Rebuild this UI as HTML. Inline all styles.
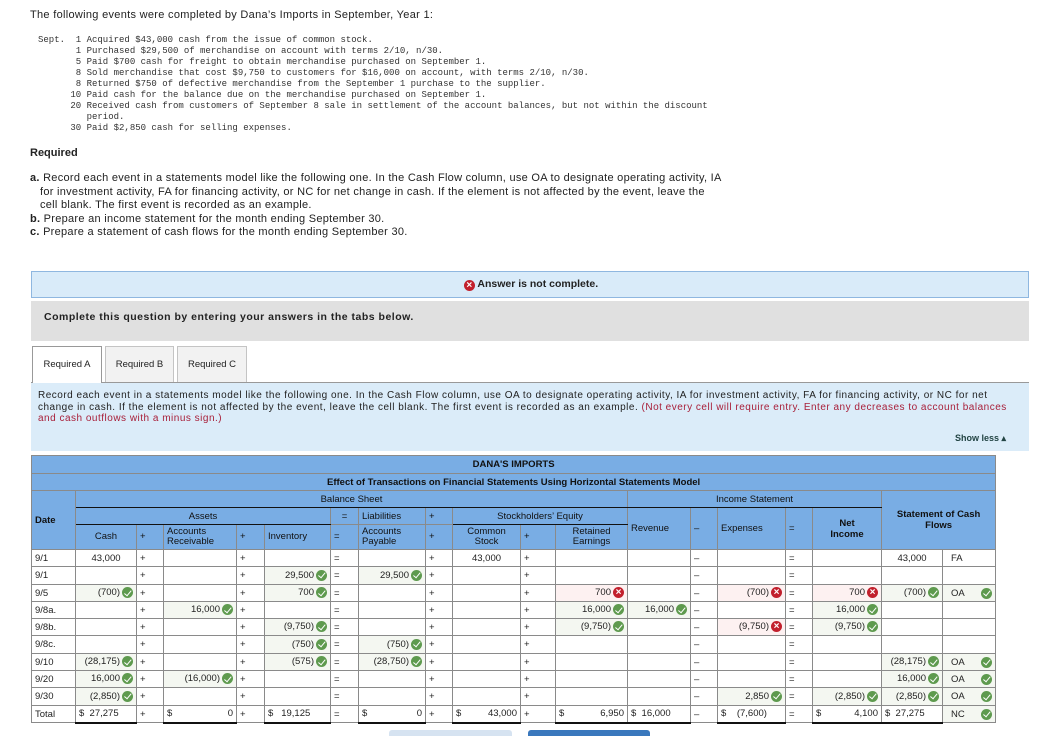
<!DOCTYPE html>
<html><head><meta charset="utf-8">
<style>
*{box-sizing:border-box;margin:0;padding:0}
body{width:1041px;height:736px;overflow:hidden;background:#fff;font-family:"Liberation Sans",Arial,sans-serif;color:#222;position:relative}
.abs{position:absolute}
.intro{left:30px;top:9px;font-size:11px;letter-spacing:0.3px}
.mono{left:38px;top:35px;font-family:"Liberation Mono",monospace;font-size:9px;line-height:11px;color:#333;white-space:pre}
.req{left:30px;top:147px;font-size:11px;font-weight:bold}
.alist{left:30px;top:172px;font-size:11px;line-height:13.5px;width:720px;letter-spacing:0.28px;white-space:nowrap}
.alist b{font-weight:bold}
.ans{left:31px;top:271px;width:998px;height:27px;background:#d9ebf9;border:1px solid #8fb7e0;font-size:10.5px;font-weight:bold;text-align:center;line-height:25px}
.gray{left:31px;top:301px;width:998px;height:40px;background:#e0e0e0;font-size:10.5px;font-weight:bold;padding-left:13px;line-height:33px;letter-spacing:0.5px}
.tab{top:346px;height:37px;font-size:9.5px;line-height:36px;text-align:center;border:1px solid #c4c4c4;background:#f2f2f2;border-bottom:none}
.tabline{left:31px;top:382px;width:998px;height:1px;background:#999}
.blue{left:31px;top:383px;width:998px;height:68px;background:#dbecf9}
.instr{left:38px;top:390px;width:985px;font-size:10px;line-height:11.5px;color:#222;white-space:nowrap;letter-spacing:0.5px}
.instr span{color:#a8203a}
.show{left:955px;top:433px;font-size:9px;font-weight:bold;color:#244}
table{position:absolute;left:31px;top:455px;border-collapse:collapse;table-layout:fixed;width:964px;font-size:9.5px}
td{border:1px solid #8a8a8a;padding:0 3px;white-space:nowrap;overflow:hidden}
.h td{background:#79ade4;color:#111}
.h td.c{text-align:center}
.bb{border-bottom:1.5px solid #111}
.r{text-align:right}
.c{text-align:center}
.g{background:#f4f7f1}
.p{background:#fdf1f1}
.k,.x{display:inline-block;width:11px;height:11px;border-radius:50%;vertical-align:middle;margin-left:2px;position:relative}
.k{background:#5e9a4e}
.k:after{content:"";position:absolute;left:3.5px;top:1.5px;width:3px;height:5.5px;border:solid #fff;border-width:0 1.6px 1.6px 0;transform:rotate(40deg)}
.x{background:#c2202d;color:#fff;font-size:10px;font-weight:bold;line-height:11px;text-align:center;font-style:normal}
.tot td{border-bottom:2.5px solid #111}
.d{display:flex;justify-content:space-between;align-items:center}
</style></head><body>
<div class="abs intro">The following events were completed by Dana’s Imports in September, Year 1:</div>
<div class="abs mono">Sept.  1 Acquired $43,000 cash from the issue of common stock.
       1 Purchased $29,500 of merchandise on account with terms 2/10, n/30.
       5 Paid $700 cash for freight to obtain merchandise purchased on September 1.
       8 Sold merchandise that cost $9,750 to customers for $16,000 on account, with terms 2/10, n/30.
       8 Returned $750 of defective merchandise from the September 1 purchase to the supplier.
      10 Paid cash for the balance due on the merchandise purchased on September 1.
      20 Received cash from customers of September 8 sale in settlement of the account balances, but not within the discount
         period.
      30 Paid $2,850 cash for selling expenses.</div>
<div class="abs req">Required</div>
<div class="abs alist"><b>a.</b> Record each event in a statements model like the following one. In the Cash Flow column, use OA to designate operating activity, IA<br>&nbsp;&nbsp;&nbsp;for investment activity, FA for financing activity, or NC for net change in cash. If the element is not affected by the event, leave the<br>&nbsp;&nbsp;&nbsp;cell blank. The first event is recorded as an example.<br><b>b.</b> Prepare an income statement for the month ending September 30.<br><b>c.</b> Prepare a statement of cash flows for the month ending September 30.</div>
<div class="abs ans"><span class="x" style="vertical-align:-1px">×</span> Answer is not complete.</div>
<div class="abs gray">Complete this question by entering your answers in the tabs below.</div>
<div class="abs tab" style="left:32px;width:70px;background:#fff;border-color:#999;height:37px;z-index:2">Required A</div>
<div class="abs tab" style="left:105px;width:69px">Required B</div>
<div class="abs tab" style="left:177px;width:70px">Required C</div>
<div class="abs tabline"></div>
<div class="abs blue"></div>
<div class="abs instr">Record each event in a statements model like the following one. In the Cash Flow column, use OA to designate operating activity, IA for investment activity, FA for financing activity, or NC for net<br>change in cash. If the element is not affected by the event, leave the cell blank. The first event is recorded as an example. <span>(Not every cell will require entry. Enter any decreases to account balances</span><br><span>and cash outflows with a minus sign.)</span></div>
<div class="abs show">Show less ▴</div>

<table>
<colgroup><col style="width:44px"><col style="width:61px"><col style="width:27px"><col style="width:73px"><col style="width:28px"><col style="width:66px"><col style="width:28px"><col style="width:67px"><col style="width:27px"><col style="width:68px"><col style="width:35px"><col style="width:72px"><col style="width:63px"><col style="width:27px"><col style="width:68px"><col style="width:27px"><col style="width:69px"><col style="width:61px"><col style="width:53px"></colgroup>
<tr class="h" style="height:18px"><td colspan="19" class="c" style="font-weight:bold">DANA'S IMPORTS</td></tr>
<tr class="h" style="height:17px"><td colspan="19" class="c" style="font-weight:bold">Effect of Transactions on Financial Statements Using Horizontal Statements Model</td></tr>
<tr class="h" style="height:17px"><td rowspan="3" style="font-weight:bold">Date</td><td colspan="11" class="c bb">Balance Sheet</td><td colspan="5" class="c bb">Income Statement</td><td colspan="2" rowspan="3" class="c" style="font-weight:bold;line-height:11px">Statement of Cash<br>Flows</td></tr>
<tr class="h" style="height:17px"><td colspan="5" class="c bb">Assets</td><td class="c">=</td><td>Liabilities</td><td>+</td><td colspan="3" class="c bb">Stockholders’ Equity</td><td rowspan="2">Revenue</td><td rowspan="2">–</td><td rowspan="2">Expenses</td><td rowspan="2">=</td><td rowspan="2" class="c" style="font-weight:bold;line-height:11px">Net<br>Income</td></tr>
<tr class="h" style="height:25px;line-height:10.5px"><td class="c">Cash</td><td>+</td><td>Accounts<br>Receivable</td><td>+</td><td>Inventory</td><td>=</td><td>Accounts<br>Payable</td><td>+</td><td class="c">Common<br>Stock</td><td>+</td><td class="c">Retained<br>Earnings</td></tr>
<tr style="height:17px"><td>9/1</td><td class="c">43,000</td><td>+</td><td></td><td>+</td><td></td><td>=</td><td></td><td>+</td><td class="c">43,000</td><td>+</td><td></td><td></td><td>–</td><td></td><td>=</td><td></td><td class="c">43,000</td><td style="padding-left:8px">FA</td></tr>
<tr style="height:18px"><td>9/1</td><td></td><td>+</td><td></td><td>+</td><td class="r g">29,500<i class="k"></i></td><td>=</td><td class="r g">29,500<i class="k"></i></td><td>+</td><td></td><td>+</td><td></td><td></td><td>–</td><td></td><td>=</td><td></td><td></td><td></td></tr>
<tr style="height:17px"><td>9/5</td><td class="r g">(700)<i class="k"></i></td><td>+</td><td></td><td>+</td><td class="r g">700<i class="k"></i></td><td>=</td><td></td><td>+</td><td></td><td>+</td><td class="r p">700<i class="x">×</i></td><td></td><td>–</td><td class="r p">(700)<i class="x">×</i></td><td>=</td><td class="r p">700<i class="x">×</i></td><td class="r g">(700)<i class="k"></i></td><td class="g"><div class="d"><span style="padding-left:5px">OA</span><i class="k"></i></div></td></tr>
<tr style="height:17px"><td>9/8a.</td><td></td><td>+</td><td class="r g">16,000<i class="k"></i></td><td>+</td><td></td><td>=</td><td></td><td>+</td><td></td><td>+</td><td class="r g">16,000<i class="k"></i></td><td class="r g">16,000<i class="k"></i></td><td>–</td><td></td><td>=</td><td class="r g">16,000<i class="k"></i></td><td></td><td></td></tr>
<tr style="height:17px"><td>9/8b.</td><td></td><td>+</td><td></td><td>+</td><td class="r g">(9,750)<i class="k"></i></td><td>=</td><td></td><td>+</td><td></td><td>+</td><td class="r g">(9,750)<i class="k"></i></td><td></td><td>–</td><td class="r p">(9,750)<i class="x">×</i></td><td>=</td><td class="r g">(9,750)<i class="k"></i></td><td></td><td></td></tr>
<tr style="height:18px"><td>9/8c.</td><td></td><td>+</td><td></td><td>+</td><td class="r g">(750)<i class="k"></i></td><td>=</td><td class="r g">(750)<i class="k"></i></td><td>+</td><td></td><td>+</td><td></td><td></td><td>–</td><td></td><td>=</td><td></td><td></td><td></td></tr>
<tr style="height:17px"><td>9/10</td><td class="r g">(28,175)<i class="k"></i></td><td>+</td><td></td><td>+</td><td class="r g">(575)<i class="k"></i></td><td>=</td><td class="r g">(28,750)<i class="k"></i></td><td>+</td><td></td><td>+</td><td></td><td></td><td>–</td><td></td><td>=</td><td></td><td class="r g">(28,175)<i class="k"></i></td><td class="g"><div class="d"><span style="padding-left:5px">OA</span><i class="k"></i></div></td></tr>
<tr style="height:17px"><td>9/20</td><td class="r g">16,000<i class="k"></i></td><td>+</td><td class="r g">(16,000)<i class="k"></i></td><td>+</td><td></td><td>=</td><td></td><td>+</td><td></td><td>+</td><td></td><td></td><td>–</td><td></td><td>=</td><td></td><td class="r g">16,000<i class="k"></i></td><td class="g"><div class="d"><span style="padding-left:5px">OA</span><i class="k"></i></div></td></tr>
<tr style="height:18px"><td>9/30</td><td class="r g">(2,850)<i class="k"></i></td><td>+</td><td></td><td>+</td><td></td><td>=</td><td></td><td>+</td><td></td><td>+</td><td></td><td></td><td>–</td><td class="r g">2,850<i class="k"></i></td><td>=</td><td class="r g">(2,850)<i class="k"></i></td><td class="r g">(2,850)<i class="k"></i></td><td class="g"><div class="d"><span style="padding-left:5px">OA</span><i class="k"></i></div></td></tr>
<tr class="tot" style="height:17px"><td style="border-bottom:1px solid #8a8a8a">Total</td><td>$&nbsp;&nbsp;27,275</td><td style="border-bottom:1px solid #8a8a8a">+</td><td><div class="d"><span>$</span><span>0</span></div></td><td style="border-bottom:1px solid #8a8a8a">+</td><td>$&nbsp;&nbsp;&nbsp;19,125</td><td style="border-bottom:1px solid #8a8a8a">=</td><td><div class="d"><span>$</span><span>0</span></div></td><td style="border-bottom:1px solid #8a8a8a">+</td><td><div class="d"><span>$</span><span>43,000</span></div></td><td style="border-bottom:1px solid #8a8a8a">+</td><td><div class="d"><span>$</span><span>6,950</span></div></td><td>$&nbsp;&nbsp;16,000</td><td style="border-bottom:1px solid #8a8a8a">–</td><td>$&nbsp;&nbsp;&nbsp;&nbsp;(7,600)</td><td style="border-bottom:1px solid #8a8a8a">=</td><td><div class="d"><span>$</span><span>4,100</span></div></td><td>$&nbsp;&nbsp;27,275</td><td class="g" style="border-bottom:1px solid #8a8a8a"><div class="d"><span style="padding-left:5px">NC</span><i class="k"></i></div></td></tr>
</table>
<div class="abs" style="left:389px;top:730px;width:123px;height:6px;background:#d6e3f1;border-radius:3px 3px 0 0"></div>
<div class="abs" style="left:528px;top:730px;width:122px;height:6px;background:#3a78bd;border-radius:3px 3px 0 0"></div>
</body></html>
